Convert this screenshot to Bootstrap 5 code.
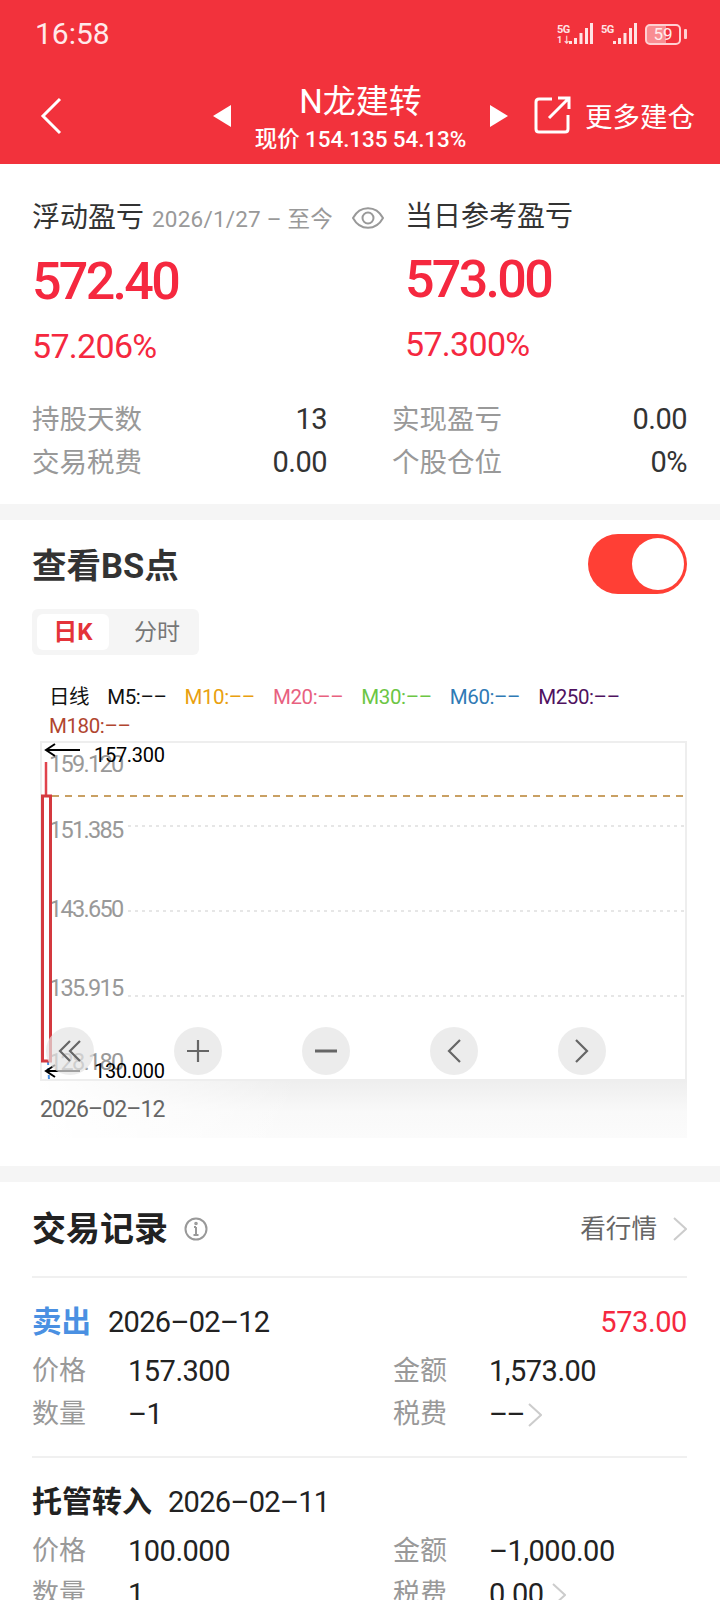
<!doctype html>
<html lang="zh-CN">
<head>
<meta charset="utf-8">
<meta name="viewport" content="width=device-width, initial-scale=1">
<title>N龙建转</title>
<link href="https://cdn.jsdelivr.net/npm/bootstrap@5.3.4/dist/css/bootstrap.min.css" rel="stylesheet">
<style>
html, body { height: 1600px; overflow: hidden; }
body { font-family: Roboto, "Noto Sans CJK SC", sans-serif; background: #f5f5f5; color: #222; width: 720px; font-variant-ligatures: none; }
svg { display: block; flex: none; }

/* header */
.top-bar { background: #f2323c; color: #fff; height: 164px; }
.status-row { height: 68px; padding: 0 33px 0 35px; }
.clock { font-size: 30px; line-height: 36px; color: #ffe9ea; }
.net-box { width: 12px; }
.net-label { font-size: 11px; line-height: 11px; font-weight: 700; color: #ffe3e4; letter-spacing: -.6px; white-space: nowrap; }
.net-sub { font-size: 9px; line-height: 10px; font-weight: 700; color: #ffe3e4; white-space: nowrap; }
.batt { width: 36px; height: 21px; border: 2px solid #ffd0d2; border-radius: 5px; font-size: 17px; line-height: 17px; color: #ffeeee;
  background: linear-gradient(90deg, #f98d92 58%, transparent 58%); text-align: center; }
.batt-tip { width: 3px; height: 10px; background: #ffd0d2; margin-left: 3px; border-radius: 1px; }
.nav-row { height: 96px; padding-left: 40px; }
.nav-back { margin-top: 29px; }
.nav-prev { margin-top: 37px; margin-left: 151px; }
.nav-next { margin-top: 37px; }
.nav-share { margin-top: 28px; margin-left: 26px; }
.name-box { width: 259px; flex: none; }
.stock-name { font-size: 33px; line-height: 40px; margin-top: 14px; }
.stock-sub { font-size: 22.5px; line-height: 28px; margin-top: 3px; white-space: nowrap; letter-spacing: -.1px; font-weight: 500; }
.more-txt { font-size: 27.5px; line-height: 36px; white-space: nowrap; margin-top: 32px; margin-left: 13px; }

/* sections */
.sheet { background: #fff; padding-left: 32px; padding-right: 33px; }
.sheet-a { height: 340px; padding-top: 37px; margin-bottom: 16px; }
.sheet-b { height: 646px; padding-top: 14px; margin-bottom: 16px; }
.sheet-c { padding-top: 29px; }

/* profit block */
.pl-grid { display: grid; grid-template-columns: 373px 1fr; }
.pl-title { font-size: 28px; line-height: 34px; color: #333; }
.pl-date { font-size: 22.5px; color: #999; margin-left: 8px; margin-top: 4px; letter-spacing: .2px; white-space: nowrap; }
.pl-eye { margin-left: 19px; }
.pl-head { height: 34px; }
.pl-big { font-size: 52px; line-height: 60px; font-weight: 500; color: #f5283f; letter-spacing: -2.7px; margin-top: 17px; }
.pl-pct { font-size: 34px; line-height: 40px; color: #f5283f; letter-spacing: -.7px; margin-top: 14px; }
.pl-col2 { margin-top: -1px; }
.pl-col2 .pl-big { margin-top: 16px; }
.stat-grid { display: grid; grid-template-columns: 295px 295px; column-gap: 65px; margin-top: 32px; }
.stat-cell { height: 43px; line-height: 43px; }
.stat-name { font-size: 27.5px; color: #999; }
.stat-val { font-size: 29px; color: #333; letter-spacing: -.5px; }

/* BS block */
.bs-title { font-size: 34.5px; line-height: 44px; font-weight: 700; color: #333; margin-top: 3px; }
.bs-switch { width: 99px; height: 60px; background: #ff3f35; border-radius: 30px; padding: 4px 3px; }
.bs-knob { width: 52px; height: 52px; background: #fff; border-radius: 50%; }
.seg-box { width: 167px; height: 46px; margin-top: 15px; background: #f5f5f5; border-radius: 6px; padding: 5px; }
.seg-on { width: 72px; height: 36px; line-height: 37px; background: #fff; border-radius: 6px; color: #e4333a; font-size: 24px; font-weight: 700; text-align: center; }
.seg-off { width: 84px; height: 36px; line-height: 38px; padding-left: 12px; color: #777; font-size: 23px; text-align: center; }
.ma-legend { padding-left: 17px; margin-top: 28px; column-gap: 18px; font-size: 20.5px; line-height: 29px; }
.ma-legend span { white-space: nowrap; letter-spacing: -.4px; }
.ma-dark { color: #111; }
.ma-10 { color: #e9a00e; }
.ma-20 { color: #e8617f; }
.ma-30 { color: #6cc644; }
.ma-60 { color: #2f7ab5; }
.ma-250 { color: #4f1260; }
.ma-180 { color: #b1452f; }
.kline-box { margin-left: 8px; height: 340px; border: 2px solid #eee; position: relative; background: #fff; }
.kline-svg { position: absolute; left: -2px; top: -2px; }
.axis-tag { position: absolute; left: 7px; font-size: 23.5px; line-height: 28px; color: #999; letter-spacing: -1.7px; }
.tag-1 { top: 7px; }
.tag-2 { top: 73px; }
.tag-3 { top: 152px; }
.tag-4 { top: 231px; }
.tag-5 { top: 305px; }
.mark-tag { position: absolute; left: 52px; font-size: 20px; line-height: 24px; color: #000; letter-spacing: -.3px; }
.mark-hi { top: 0; }
.mark-lo { top: 316px; }
.kline-btns { position: absolute; left: 4px; top: 284px; gap: 80px; }
.round-btn { width: 48px; height: 48px; border-radius: 50%; background: rgba(228,228,228,.7); }
.date-strip { margin-left: 8px; height: 57px; line-height: 58px; font-size: 23px; color: #666; letter-spacing: -.9px;
  background: linear-gradient(90deg, #fff 0, rgba(255,255,255,0) 40%), linear-gradient(180deg, #eee, #f9f9f9 55%, #fbfbfb); }

/* trade records */
.rec-head { height: 36px; }
.rec-title { font-size: 34px; line-height: 36px; font-weight: 700; color: #222; }
.rec-link { font-size: 25.6px; line-height: 36px; color: #666; }
.rec-line { border-top: 2px solid #f0f0f0; }
.rec-first { margin-top: 29px; }
.rec-item { height: 178px; padding-top: 24px; }
.rec-main { height: 40px; line-height: 40px; }
.rec-sell { font-size: 29.5px; font-weight: 700; color: #4a90e2; margin-right: 17px; }
.rec-in { font-size: 30px; font-weight: 700; color: #222; margin-right: 16px; }
.rec-date { font-size: 29px; color: #222; letter-spacing: -.7px; }
.rec-gain { font-size: 29px; color: #f5283f; letter-spacing: -.4px; }
.rec-grid { display: grid; grid-template-columns: 361px 1fr; margin-top: 8px; }
.rec-cell { height: 43px; line-height: 43px; }
.rec-key { font-size: 27px; color: #999; width: 96px; flex: none; }
.rec-val { font-size: 29px; color: #222; letter-spacing: -.5px; }
.rec-dash { letter-spacing: -1.5px; }
</style>
</head>
<body>

<!-- header -->
<div class="top-bar">
  <div class="status-row d-flex align-items-center justify-content-between">
    <div class="clock">16:58</div>
    <div class="d-flex align-items-center">
      <div class="net-box">
        <div class="net-label">5G</div>
        <div class="net-sub">1↓</div>
      </div>
      <svg width="24" height="22" viewBox="0 0 24 22" fill="#ffe3e4"><rect x="0" y="18" width="3" height="3"/><rect x="5" y="15" width="3" height="6"/><rect x="10.5" y="10" width="3" height="11"/><rect x="16" y="5" width="3" height="16"/><rect x="21" y="0" width="3" height="21"/></svg>
      <div class="net-box ms-2">
        <div class="net-label">5G</div>
        <div class="net-sub">&nbsp;</div>
      </div>
      <svg width="24" height="22" viewBox="0 0 24 22" fill="#ffe3e4"><rect x="0" y="18" width="3" height="3"/><rect x="5" y="15" width="3" height="6"/><rect x="10.5" y="10" width="3" height="11"/><rect x="16" y="5" width="3" height="16"/><rect x="21" y="0" width="3" height="21"/></svg>
      <div class="batt ms-2">59</div>
      <div class="batt-tip"></div>
    </div>
  </div>
  <div class="nav-row d-flex align-items-start">
    <svg class="nav-back" width="22" height="38" viewBox="0 0 22 38" fill="none" stroke="#fff" stroke-width="3"><path d="M20 2 L3 19 L20 36"/></svg>
    <svg class="nav-prev" width="18" height="22" viewBox="0 0 18 22" fill="#fff"><path d="M18 0 V22 L0 11 Z"/></svg>
    <div class="name-box text-center">
      <div class="stock-name">N龙建转</div>
      <div class="stock-sub">现价 154.135 54.13%</div>
    </div>
    <svg class="nav-next" width="18" height="22" viewBox="0 0 18 22" fill="#fff"><path d="M0 0 V22 L18 11 Z"/></svg>
    <svg class="nav-share" width="38" height="38" viewBox="0 0 38 38" fill="none" stroke="#fff" stroke-width="3"><path d="M18 3 H5 Q2 3 2 6 V33 Q2 36 5 36 H31 Q34 36 34 33 V19"/><path d="M15 22 L34 3 M24 2 H35 V13"/></svg>
    <div class="more-txt">更多建仓</div>
  </div>
</div>

<!-- profit -->
<div class="sheet sheet-a">
  <div class="pl-grid">
    <div>
      <div class="pl-head d-flex align-items-center">
        <span class="pl-title">浮动盈亏</span>
        <span class="pl-date">2026/1/27 – 至今</span>
        <svg class="pl-eye" width="32" height="24" viewBox="0 0 32 24" fill="none" stroke="#999" stroke-width="2"><path d="M1 12 C8 -1 24 -1 31 12 C24 25 8 25 1 12 Z"/><circle cx="16" cy="12" r="5.5"/></svg>
      </div>
      <div class="pl-big">572.40</div>
      <div class="pl-pct">57.206%</div>
    </div>
    <div class="pl-col2">
      <div class="pl-title">当日参考盈亏</div>
      <div class="pl-big">573.00</div>
      <div class="pl-pct">57.300%</div>
    </div>
  </div>
  <div class="stat-grid">
    <div class="stat-cell d-flex justify-content-between"><span class="stat-name">持股天数</span><span class="stat-val">13</span></div>
    <div class="stat-cell d-flex justify-content-between"><span class="stat-name">实现盈亏</span><span class="stat-val">0.00</span></div>
    <div class="stat-cell d-flex justify-content-between"><span class="stat-name">交易税费</span><span class="stat-val">0.00</span></div>
    <div class="stat-cell d-flex justify-content-between"><span class="stat-name">个股仓位</span><span class="stat-val">0%</span></div>
  </div>
</div>

<!-- BS chart -->
<div class="sheet sheet-b">
  <div class="d-flex justify-content-between align-items-center">
    <div class="bs-title">查看BS点</div>
    <div class="bs-switch d-flex justify-content-end"><div class="bs-knob"></div></div>
  </div>
  <div class="seg-box d-flex">
    <div class="seg-on">日K</div>
    <div class="seg-off">分时</div>
  </div>
  <div class="ma-legend d-flex flex-wrap">
    <span class="ma-dark">日线</span>
    <span class="ma-dark">M5:––</span>
    <span class="ma-10">M10:––</span>
    <span class="ma-20">M20:––</span>
    <span class="ma-30">M30:––</span>
    <span class="ma-60">M60:––</span>
    <span class="ma-250">M250:––</span>
    <span class="ma-180">M180:––</span>
  </div>
  <div class="kline-box">
    <span class="axis-tag tag-1">159.120</span>
    <span class="axis-tag tag-2">151.385</span>
    <span class="axis-tag tag-3">143.650</span>
    <span class="axis-tag tag-4">135.915</span>
    <span class="axis-tag tag-5">128.180</span>
    <svg class="kline-svg" width="647" height="340" viewBox="0 0 647 340" fill="none">
      <path d="M88 85 H645 M88 170 H645 M88 255 H645" stroke="#e6e6e6" stroke-width="2" stroke-dasharray="3 4"/>
      <path d="M12 55 H645" stroke="#c9a063" stroke-width="2" stroke-dasharray="7 6"/>
      <path d="M8 320 L9 339" stroke="#4a90e2" stroke-width="2" stroke-dasharray="4 3"/>
      <path d="M6 21 V54" stroke="#e0434c" stroke-width="2.5"/>
      <rect x="2.5" y="55" width="8" height="265" stroke="#d4393f" stroke-width="3"/>
      <path d="M40 9 H7 M15 3 L6 9 L15 15" stroke="#000" stroke-width="2"/>
      <path d="M40 330 H7 M15 324 L6 330 L15 336" stroke="#000" stroke-width="2"/>
    </svg>
    <span class="mark-tag mark-hi">157.300</span>
    <span class="mark-tag mark-lo">130.000</span>
    <div class="kline-btns d-flex">
      <div class="round-btn d-flex align-items-center justify-content-center">
        <svg width="26" height="24" viewBox="0 0 26 24" fill="none" stroke="#666" stroke-width="2.2"><path d="M13 2 L3 12 L13 22 M23 2 L13 12 L23 22"/></svg>
      </div>
      <div class="round-btn d-flex align-items-center justify-content-center">
        <svg width="24" height="24" viewBox="0 0 24 24" fill="none" stroke="#666" stroke-width="2.2"><path d="M12 1 V23 M1 12 H23"/></svg>
      </div>
      <div class="round-btn d-flex align-items-center justify-content-center">
        <svg width="24" height="24" viewBox="0 0 24 24" fill="none" stroke="#666" stroke-width="3"><path d="M1 12 H23"/></svg>
      </div>
      <div class="round-btn d-flex align-items-center justify-content-center">
        <svg width="16" height="26" viewBox="0 0 16 26" fill="none" stroke="#666" stroke-width="2.2"><path d="M14 2 L3 13 L14 24"/></svg>
      </div>
      <div class="round-btn d-flex align-items-center justify-content-center">
        <svg width="16" height="26" viewBox="0 0 16 26" fill="none" stroke="#666" stroke-width="2.2"><path d="M2 2 L13 13 L2 24"/></svg>
      </div>
    </div>
  </div>
  <div class="date-strip">2026–02–12</div>
</div>

<!-- records -->
<div class="sheet sheet-c">
  <div class="rec-head d-flex justify-content-between align-items-center">
    <div class="d-flex align-items-center">
      <span class="rec-title">交易记录</span>
      <svg class="ms-3" width="24" height="24" viewBox="0 0 24 24" fill="none" stroke="#999" stroke-width="2"><circle cx="12" cy="12" r="10.5"/><path d="M12 10 V18 M9.5 18 H14.5 M10 10 H12"/><circle cx="12" cy="6.5" r=".8"/></svg>
    </div>
    <div class="d-flex align-items-center">
      <span class="rec-link">看行情</span>
      <svg class="ms-3" width="14" height="24" viewBox="0 0 14 24" fill="none" stroke="#ccc" stroke-width="2"><path d="M1 1 L13 12 L1 23"/></svg>
    </div>
  </div>
  <div class="rec-line rec-first"></div>
  <div class="rec-item">
    <div class="rec-main d-flex justify-content-between">
      <div><span class="rec-sell">卖出</span><span class="rec-date">2026–02–12</span></div>
      <span class="rec-gain">573.00</span>
    </div>
    <div class="rec-grid">
      <div class="rec-cell d-flex"><span class="rec-key">价格</span><span class="rec-val">157.300</span></div>
      <div class="rec-cell d-flex"><span class="rec-key">金额</span><span class="rec-val">1,573.00</span></div>
      <div class="rec-cell d-flex"><span class="rec-key">数量</span><span class="rec-val">–1</span></div>
      <div class="rec-cell d-flex align-items-center"><span class="rec-key">税费</span><span class="rec-val rec-dash">––</span>
        <svg class="ms-1" width="14" height="24" viewBox="0 0 14 24" fill="none" stroke="#ccc" stroke-width="2"><path d="M1 1 L13 12 L1 23"/></svg></div>
    </div>
  </div>
  <div class="rec-line"></div>
  <div class="rec-item">
    <div class="rec-main d-flex justify-content-between">
      <div><span class="rec-in">托管转入</span><span class="rec-date">2026–02–11</span></div>
    </div>
    <div class="rec-grid">
      <div class="rec-cell d-flex"><span class="rec-key">价格</span><span class="rec-val">100.000</span></div>
      <div class="rec-cell d-flex"><span class="rec-key">金额</span><span class="rec-val">–1,000.00</span></div>
      <div class="rec-cell d-flex"><span class="rec-key">数量</span><span class="rec-val">1</span></div>
      <div class="rec-cell d-flex align-items-center"><span class="rec-key">税费</span><span class="rec-val">0.00</span>
        <svg class="ms-2" width="14" height="24" viewBox="0 0 14 24" fill="none" stroke="#ccc" stroke-width="2"><path d="M1 1 L13 12 L1 23"/></svg></div>
    </div>
  </div>
</div>

<script src="https://cdn.jsdelivr.net/npm/bootstrap@5.3.4/dist/js/bootstrap.bundle.min.js"></script>
</body>
</html>
